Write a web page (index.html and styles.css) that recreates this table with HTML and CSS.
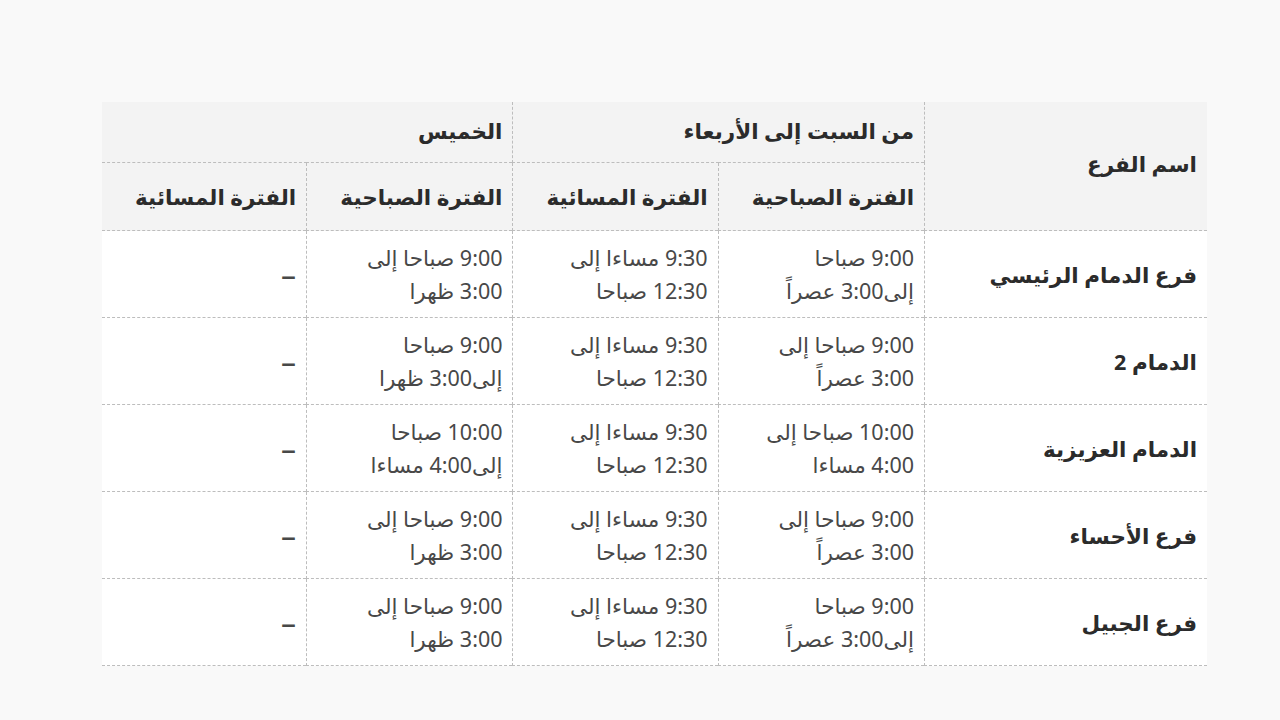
FILE: index.html
```html
<!DOCTYPE html>
<html lang="ar" dir="rtl">
<head>
<meta charset="utf-8">
<link rel="stylesheet" href="styles.css">
</head>
<body>
<div class="wrap">
<table class="hours">
<thead>
<tr class="head-top">
<th rowspan="2" class="name-col">اسم الفرع</th>
<th colspan="2">من السبت إلى الأربعاء</th>
<th colspan="2">الخميس</th>
</tr>
<tr class="head-sub">
<th>الفترة الصباحية</th>
<th>الفترة المسائية</th>
<th>الفترة الصباحية</th>
<th>الفترة المسائية</th>
</tr>
</thead>
<tbody>
<tr>
<th>فرع الدمام الرئيسي</th>
<td>9:00 صباحا<br>إلى3:00 عصراً</td>
<td>9:30 مساءا إلى<br>12:30 صباحا</td>
<td>9:00 صباحا إلى<br>3:00 ظهرا</td>
<td><span class="dash">–</span></td>
</tr>
<tr>
<th>الدمام 2</th>
<td>9:00 صباحا إلى<br>3:00 عصراً</td>
<td>9:30 مساءا إلى<br>12:30 صباحا</td>
<td>9:00 صباحا<br>إلى3:00 ظهرا</td>
<td><span class="dash">–</span></td>
</tr>
<tr>
<th>الدمام العزيزية</th>
<td>10:00 صباحا إلى<br>4:00 مساءا</td>
<td>9:30 مساءا إلى<br>12:30 صباحا</td>
<td>10:00 صباحا<br>إلى4:00 مساءا</td>
<td><span class="dash">–</span></td>
</tr>
<tr>
<th>فرع الأحساء</th>
<td>9:00 صباحا إلى<br>3:00 عصراً</td>
<td>9:30 مساءا إلى<br>12:30 صباحا</td>
<td>9:00 صباحا إلى<br>3:00 ظهرا</td>
<td><span class="dash">–</span></td>
</tr>
<tr>
<th>فرع الجبيل</th>
<td>9:00 صباحا<br>إلى3:00 عصراً</td>
<td>9:30 مساءا إلى<br>12:30 صباحا</td>
<td>9:00 صباحا إلى<br>3:00 ظهرا</td>
<td><span class="dash">–</span></td>
</tr>
</tbody>
</table>
</div>
</body>
</html>
```
FILE: styles.css
```css
html, body {
  margin: 0;
  padding: 0;
  background: #f9f9f9;
}
body {
  font-family: "Noto Sans", "DejaVu Sans", sans-serif;
  color: #333;
}
.wrap {
  padding: 102px 73px 0 102px;
}
.hours {
  width: 1105px;
  border-collapse: collapse;
  font-size: 21.5px;
  line-height: 33px;
}
.hours th, .hours td {
  border: 1px dashed #bdbdbd;
  text-align: right;
  padding: 10px 10px 10px 10px;
  vertical-align: middle;
}
.hours thead th {
  background: #f3f3f3;
  font-weight: bold;
  color: #2b2b2b;
}
.head-top th {
  padding: 12px 10px 15px;
}
.head-sub th {
  padding: 17px 10px 17px;
}
.hours thead .name-col {
  padding-bottom: 18px;
}
.hours tbody tr {
  background: #fff;
}
.hours tbody th {
  font-weight: bold;
  color: #2b2b2b;
}
.hours td {
  color: #484848;
}
.dash {
  display: inline-block;
  font-size: 30px;
  line-height: 33px;
  position: relative;
  top: 2px;
}
.hours .name-col {
  width: 262px;
}
.hours tr:first-child th:first-child,
.hours tbody th {
  border-right: none;
}
.hours thead tr:first-child th {
  border-top: none;
}
.hours tr td:last-child,
.hours thead tr:first-child th:last-child {
  border-left: none;
}
.hours thead tr:nth-child(2) th:last-child {
  border-left: none;
}
```
